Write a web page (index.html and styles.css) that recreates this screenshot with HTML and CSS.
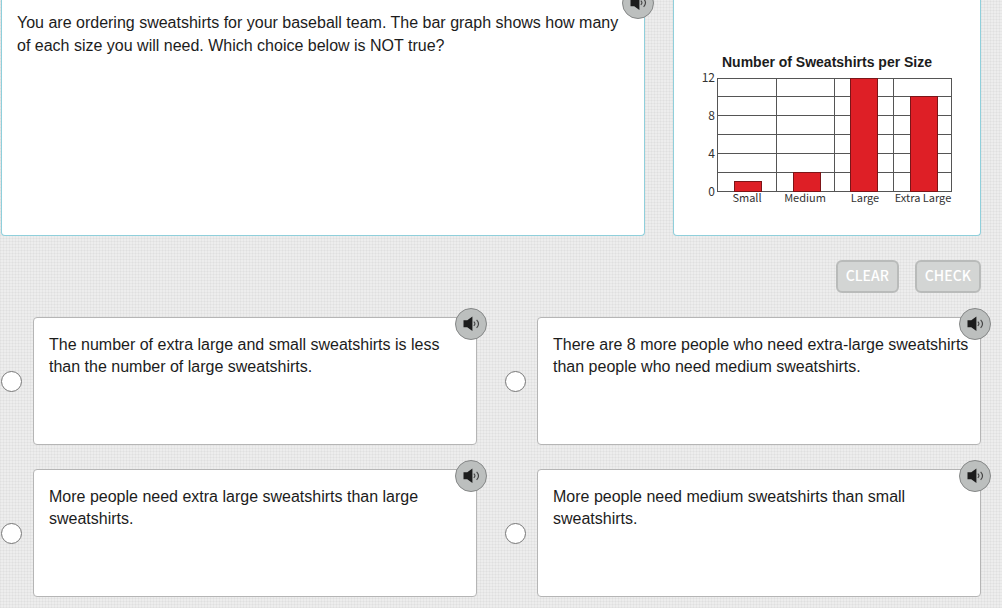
FILE: index.html
```html
<!DOCTYPE html>
<html lang="en">
<head>
  <meta charset="UTF-8" />
  <title>Number of Sweatshirts per Size</title>
  <meta name="viewport" content="width=device-width, initial-scale=1.0"/>
  <link rel="stylesheet" href="styles.css">
</head>
<body>

  <!-- shared speaker icon -->
  <svg class="sprite" aria-hidden="true">
    <symbol id="speaker" viewBox="0 0 32 32">
      <path d="M8 12h4l5.500-4v15.500L12 19.500H8z" fill="#1c1c1c"/>
      <path d="M19 13.500q2.400 2.300 0 4.600M22 11.500q4 4.300 0 8.600" fill="none" stroke="#444" stroke-width="1.200"/>
    </symbol>
  </svg>

  <main>
    <form id="question-form">
      <div class="question">
        <section class="panel prompt">
          <p>You are ordering sweatshirts for your baseball team. The bar graph shows how many of each size you will need. Which choice below is NOT true?</p>
          <button type="button" class="speak speak-top" aria-label="Read question"><svg><use href="#speaker"/></svg></button>
        </section>

        <section class="panel graph">
          <h2>Number of Sweatshirts per Size</h2>
          <svg class="chart" viewBox="-10 -6 280 142" role="img" aria-label="Bar graph of sweatshirts per size">
            <g class="grid">
              <path d="M20 6.500H255M20 24.500H255M20 43.500H255M20 62.500H255M20 81.500H255M20 100.500H255M20 119.500H255"/>
              <path d="M20.500 6V120M79.500 6V120M137.500 6V120M196.500 6V120M254.500 6V120"/>
            </g>
            <g class="bars">
              <rect x="37.500" y="109.500" width="27" height="10"/>
              <rect x="96.500" y="100.500" width="27" height="19"/>
              <rect x="153.500" y="6.500" width="27" height="113"/>
              <rect x="213.500" y="24.500" width="27" height="95"/>
            </g>
            <g class="ticks">
              <text x="18" y="10">12</text>
              <text x="18" y="48">8</text>
              <text x="18" y="86">4</text>
              <text x="18" y="124">0</text>
            </g>
            <g class="labels">
              <text x="50" y="130">Small</text>
              <text x="108" y="130">Medium</text>
              <text x="168" y="130">Large</text>
              <text x="226" y="130">Extra Large</text>
            </g>
          </svg>
        </section>
      </div>

      <div class="actions">
        <button type="reset" class="btn">CLEAR</button>
        <button type="submit" class="btn">CHECK</button>
      </div>

      <div class="choices">
        <div class="choice">
          <input type="radio" name="answer" id="answer-a" value="a" />
          <div class="card">
            <label for="answer-a">The number of extra large and small sweatshirts is less than the number of large sweatshirts.</label>
            <button type="button" class="speak" aria-label="Read choice A"><svg><use href="#speaker"/></svg></button>
          </div>
        </div>
        <div class="choice">
          <input type="radio" name="answer" id="answer-b" value="b" />
          <div class="card">
            <label for="answer-b">There are 8 more people who need extra-large sweatshirts than people who need medium sweatshirts.</label>
            <button type="button" class="speak" aria-label="Read choice B"><svg><use href="#speaker"/></svg></button>
          </div>
        </div>
        <div class="choice">
          <input type="radio" name="answer" id="answer-c" value="c" />
          <div class="card">
            <label for="answer-c">More people need extra large sweatshirts than large sweatshirts.</label>
            <button type="button" class="speak" aria-label="Read choice C"><svg><use href="#speaker"/></svg></button>
          </div>
        </div>
        <div class="choice">
          <input type="radio" name="answer" id="answer-d" value="d" />
          <div class="card">
            <label for="answer-d">More people need medium sweatshirts than small sweatshirts.</label>
            <button type="button" class="speak" aria-label="Read choice D"><svg><use href="#speaker"/></svg></button>
          </div>
        </div>
      </div>
    </form>
  </main>

  <script>
    document.getElementById('question-form').addEventListener('submit', (e) => {
      e.preventDefault();
    });
  </script>

</body>
</html>
```
FILE: styles.css
```css
* {
  box-sizing: border-box;
}

body {
  margin: 0;
  font-family: "Liberation Sans", Arial, sans-serif;
  font-size: 16px;
  line-height: 22px;
  color: #1c1c1c;
  background-color: #ededed;
  background-image:
    repeating-linear-gradient(0deg, rgba(0, 0, 0, 0.03) 0 1px, transparent 1px 3px),
    repeating-linear-gradient(90deg, rgba(0, 0, 0, 0.03) 0 1px, transparent 1px 3px);
}

.sprite {
  display: none;
}

main {
  padding: 0 21px 11px 1px;
}

.question {
  display: grid;
  grid-template-columns: 644fr 308fr;
  gap: 28px;
}

.panel {
  position: relative;
  min-height: 236px;
  background: #fff;
  border: 1px solid #8fcfdb;
  border-top-width: 0;
  border-radius: 0 0 4px 4px;
}

.prompt {
  padding: 11px 16px 16px 15px;
  line-height: 23px;
}

.prompt p {
  margin: 0;
}

.graph {
  display: flex;
  flex-direction: column;
  align-items: center;
  padding-top: 54px;
}

.graph h2 {
  margin: 0 0 -4px;
  font-size: 14px;
  line-height: 16px;
}

.chart {
  width: 280px;
  height: 142px;
}

.grid path {
  fill: none;
  stroke: #555;
}

.bars rect {
  fill: #de1f26;
  stroke: #7c1518;
}

.ticks text,
.labels text {
  font-family: "Noto Sans CJK SC", sans-serif;
  font-size: 11px;
  fill: #333;
}

.ticks text {
  font-size: 12px;
  text-anchor: end;
}

.labels text {
  text-anchor: middle;
}

.actions {
  display: flex;
  justify-content: flex-end;
  gap: 16px;
  padding: 24px 0;
}

.btn {
  height: 33px;
  padding: 0 8px 4px;
  font-family: "Noto Sans CJK SC", sans-serif;
  font-size: 14px;
  font-weight: 500;
  line-height: 20px;
  color: #fff;
  background: #d3d5d4;
  border: 2px solid #b9bbba;
  border-radius: 6px;
  cursor: pointer;
}

.choices {
  display: grid;
  grid-template-columns: 1fr 1fr;
  gap: 24px 28px;
}

.choice {
  display: flex;
  align-items: center;
  gap: 11px;
}

.choice input {
  appearance: none;
  flex: none;
  width: 21px;
  height: 21px;
  margin: 0;
  background: #fff;
  border: 1px solid #777;
  border-radius: 50%;
}

.choice input:checked {
  background: radial-gradient(#333 0 5px, #fff 6px);
}

.card {
  position: relative;
  flex: 1;
  min-height: 128px;
  padding: 16px 8px 16px 15px;
  background: #fff;
  border: 1px solid #b5b5b5;
  border-radius: 4px;
}

.card label {
  display: block;
}

.speak {
  position: absolute;
  top: -10px;
  right: -11px;
  width: 32px;
  height: 32px;
  padding: 0;
  background: #bcbfbe;
  border: 1px solid #858787;
  border-radius: 50%;
  cursor: pointer;
}

.speak-top {
  top: -13px;
  right: -10px;
}

.speak svg {
  display: block;
  width: 30px;
  height: 30px;
}

@media (max-width: 700px) {
  .question,
  .choices {
    grid-template-columns: 1fr;
  }
}
```
